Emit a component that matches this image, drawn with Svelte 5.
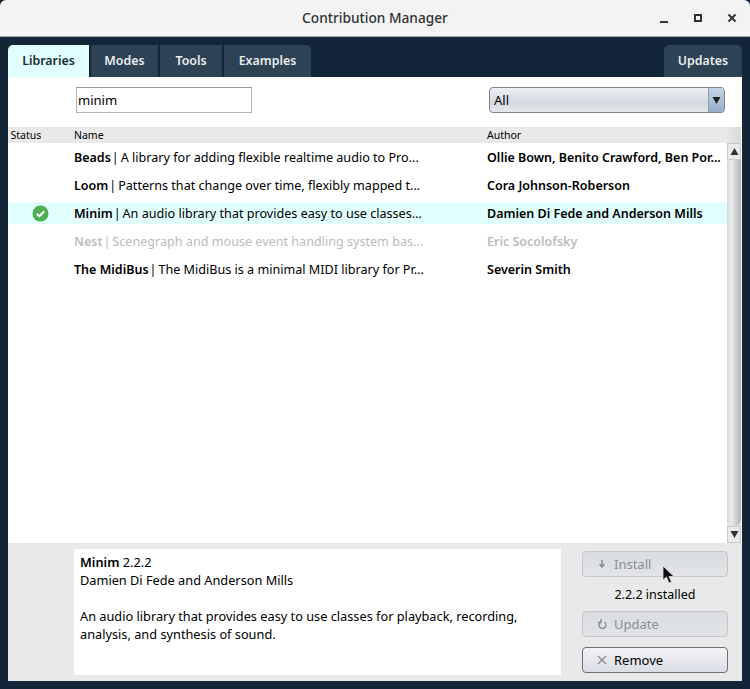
<script>
  const tabs = ['Libraries', 'Modes', 'Tools', 'Examples'];
  const rows = [
    { name: 'Beads', desc: 'A library for adding flexible realtime audio to Pro...', author: 'Ollie Bown, Benito Crawford, Ben Por...' },
    { name: 'Loom', desc: 'Patterns that change over time, flexibly mapped t...', author: 'Cora Johnson-Roberson' },
    { name: 'Minim', desc: 'An audio library that provides easy to use classes...', author: 'Damien Di Fede and Anderson Mills', installed: true },
    { name: 'Nest', desc: 'Scenegraph and mouse event handling system bas...', author: 'Eric Socolofsky', muted: true },
    { name: 'The MidiBus', desc: 'The MidiBus is a minimal MIDI library for Pr...', author: 'Severin Smith' }
  ];
</script>

<div class="window">
  <header class="titlebar">
    <div class="title">Contribution Manager</div>
    <div class="controls">
      <svg width="12" height="12" viewBox="0 0 12 12"><rect x="2" y="9" width="8" height="2" fill="#2e3436"/></svg>
      <svg width="12" height="12" viewBox="0 0 12 12"><rect x="3" y="3" width="6" height="6" fill="none" stroke="#2e3436" stroke-width="2"/></svg>
      <svg width="12" height="12" viewBox="0 0 12 12"><path d="M2.500 2.500l7 7M9.500 2.500l-7 7" stroke="#2e3436" stroke-width="2"/></svg>
    </div>
  </header>

  <div class="body">
    <nav class="tabs">
      {#each tabs as tab, i}
        <div class="tab" class:active={i === 0}>{tab}</div>
      {/each}
      <div class="tab updates">Updates</div>
    </nav>

    <section class="panel">
      <div class="filters">
        <div class="search">minim</div>
        <div class="select">
          <span class="select-label">All</span>
          <span class="select-arrow"><svg width="9" height="8" viewBox="0 0 9 8"><path d="M0.500 1h8l-4 7z" fill="#222"/></svg></span>
        </div>
      </div>

      <div class="table">
        <div class="list">
          <div class="header">
            <span class="c-status">Status</span>
            <span class="c-name">Name</span>
            <span class="c-author">Author</span>
          </div>
          <div class="rows">
            {#each rows as r}
              <div class="row" class:selected={r.installed} class:muted={r.muted}>
                <span class="c-icon">
                  {#if r.installed}
                    <svg width="17" height="17" viewBox="0 0 17 17"><circle cx="8.500" cy="8.500" r="8" fill="#4caf50"/><path d="M4.800 8.800l2.600 2.500 4.800-5" fill="none" stroke="#fff" stroke-width="2"/></svg>
                  {/if}
                </span>
                <span class="c-desc"><b>{r.name}</b><span class="pipe">|</span><span class="text">{r.desc}</span></span>
                <b class="c-auth">{r.author}</b>
              </div>
            {/each}
          </div>
        </div>
        <div class="scrollbar">
          <div class="sb-corner"></div>
          <div class="sb-btn"><svg width="9" height="7" viewBox="0 0 9 7"><path d="M4.500 0l4 7h-8z" fill="#333"/></svg></div>
          <div class="sb-thumb"></div>
          <div class="sb-btn"><svg width="9" height="7" viewBox="0 0 9 7"><path d="M0.500 0h8l-4 7z" fill="#333"/></svg></div>
        </div>
      </div>

      <div class="details">
        <div class="desc">
          <div><b>Minim</b> 2.2.2</div>
          <div>Damien Di Fede and Anderson Mills</div>
          <div class="gap">An audio library that provides easy to use classes for playback, recording,</div>
          <div>analysis, and synthesis of sound.</div>
        </div>
        <div class="actions">
          <div class="btn disabled">
            <svg width="10" height="10" viewBox="0 0 10 10"><path d="M5 1v6M2.500 5L5 8l2.500-3" fill="none" stroke="#888" stroke-width="1.400"/></svg>
            <span>Install</span>
          </div>
          <div class="status">2.2.2 installed</div>
          <div class="btn disabled">
            <svg width="10" height="12" viewBox="0 0 10 12"><path d="M7.500 4a3.500 3.500 0 1 1-4 0M4 1v3.500H1" fill="none" stroke="#888" stroke-width="1.300"/></svg>
            <span>Update</span>
          </div>
          <div class="btn enabled">
            <svg width="10" height="10" viewBox="0 0 10 10"><path d="M1 1l8 8M9 1l-8 8" stroke="#888" stroke-width="1.300"/></svg>
            <span>Remove</span>
          </div>
          <svg class="cursor" width="14" height="20" viewBox="0 0 14 20"><path d="M1 1v14l3.500-3 2.500 6 2.500-1-2.500-5.500H12z" fill="#111" stroke="#ddd" stroke-width="0.800"/></svg>
        </div>
      </div>
    </section>
  </div>
</div>

<style>
  :global(body) { margin: 0; background: #132638; }
  .window {
    width: 750px; height: 689px; display: flex; flex-direction: column;
    font-family: "Noto Sans", sans-serif; font-size: 12.500px; color: #000; overflow: hidden;
  }
  .titlebar {
    flex: none; position: relative; background: #f3f3f3;
    border-bottom: 1px solid #a9a9a5; border-radius: 6px 6px 0 0;
    display: flex; align-items: center; justify-content: center; padding-bottom: 2px; height: 34px;
  }
  .title { font-size: 13.700px; font-weight: 500; color: #2e3436; }
  .controls { position: absolute; right: 12px; top: 12px; display: flex; gap: 22px; }
  .body { flex: 1; background: #132638; padding: 8px; display: flex; flex-direction: column; min-height: 0; }
  .tabs { display: flex; gap: 2px; height: 32px; flex: none; }
  .tab {
    height: 32px; background: #2d4252; color: #e8edf0; border-radius: 5px 5px 0 0;
    display: flex; align-items: center; justify-content: center; font-size: 12.400px; font-weight: 600; padding-bottom: 2px; box-sizing: border-box;
  }
  .tab:nth-child(1) { width: 81px; background: #e0fffd; color: #1a2a36; border-radius: 5px 0 0 0; }
  .tab:nth-child(2) { width: 67px; border-radius: 0; }
  .tab:nth-child(3) { width: 62px; border-radius: 0; }
  .tab:nth-child(4) { width: 87px; border-radius: 0 5px 0 0; }
  .tab.updates { width: 78px; margin-left: auto; }
  .panel { flex: 1; background: #fff; display: flex; flex-direction: column; min-height: 0; }
  .filters { height: 50px; flex: none; display: flex; align-items: flex-start; padding: 10px 17px 0 68px; justify-content: space-between; box-sizing: border-box; }
  .search {
    width: 176px; height: 26px; box-sizing: border-box; border: 1px solid #b5b5b5; border-top-color: #999;
    padding: 0 1px; display: flex; align-items: center; font-size: 13px;
  }
  .select {
    width: 236px; height: 26px; box-sizing: border-box; border: 1px solid #7d8489; border-radius: 4px;
    background: linear-gradient(#eef0f4, #d4d8e0 60%, #e6e8ec); display: flex; align-items: stretch; overflow: hidden;
  }
  .select-label { flex: 1; padding-left: 4px; display: flex; align-items: center; font-size: 13px; }
  .select-arrow { width: 15px; display: flex; align-items: center; justify-content: center; border-left: 1px solid #8a9cb0; background: linear-gradient(#c6d4e4, #95aec8); }
  .table { flex: 1; display: flex; min-height: 0; }
  .list { flex: 1; min-width: 0; display: flex; flex-direction: column; }
  .header { height: 16px; background: #e9e9e9; display: flex; align-items: center; font-size: 10.500px; position: relative; flex: none; }
  .c-status { position: absolute; left: 2.500px; }
  .c-name { position: absolute; left: 66px; }
  .c-author { position: absolute; left: 479px; }
  .rows { padding-top: 3px; display: flex; flex-direction: column; gap: 6px; }
  .row { height: 22px; display: flex; align-items: center; white-space: nowrap; }
  .row.selected { background: #e0fffd; }
  .row.muted { color: #bcbcbc; }
  .c-icon { width: 66px; display: flex; justify-content: center; padding-right: 1px; box-sizing: border-box; }
  .c-desc { width: 413px; overflow: hidden; flex: none; display: flex; align-items: center; }
  .pipe { margin: 0 2px 0 1px; }
  .text { font-size: 12.600px; }
  .c-auth { flex: 1; overflow: hidden; font-weight: 600; font-size: 12.500px; }
  b { font-weight: 600; }
  .scrollbar { width: 14px; margin-right: 1px; flex: none; display: flex; flex-direction: column; background: #e8e9eb; }
  .sb-corner { height: 16px; flex: none; background: linear-gradient(90deg, #e6e7e9, #d8dadd); }
  .sb-btn { height: 17px; flex: none; background: #e8eaee; border: 1px solid #c5c8cc; box-sizing: border-box; display: flex; align-items: center; justify-content: center; }
  .sb-thumb { flex: 1; border-radius: 0 0 6px 6px; background: linear-gradient(90deg, #d6d7da, #ececee 30%, #b4b5b8); }
  .details { height: 138px; flex: none; background: #e9e9e9; padding: 6px 14px 6px 66px; display: flex; gap: 21px; box-sizing: border-box; }
  .desc { width: 487px; height: 126px; background: #fff; padding: 4px 6px; box-sizing: border-box; line-height: 18px; font-size: 12.750px; }
  .gap { margin-top: 19px; line-height: 17px; }
  .actions { width: 146px; padding-top: 2px; position: relative; display: flex; flex-direction: column; }
  .btn { height: 26px; box-sizing: border-box; border-radius: 4px; display: flex; align-items: center; padding-left: 14px; gap: 7px; font-size: 13px; }
  .btn.disabled { background: linear-gradient(#d9dce0, #e2e4e8); border: 1px solid #c3c6ca; color: #8b8f94; }
  .btn.enabled { background: linear-gradient(#f2f3f6, #dadde4); border: 1px solid #6d7175; margin-top: 10px; }
  .status { height: 34px; display: flex; align-items: center; justify-content: center; font-size: 12.500px; }
  .cursor { position: absolute; left: 80px; top: 16px; }
</style>
